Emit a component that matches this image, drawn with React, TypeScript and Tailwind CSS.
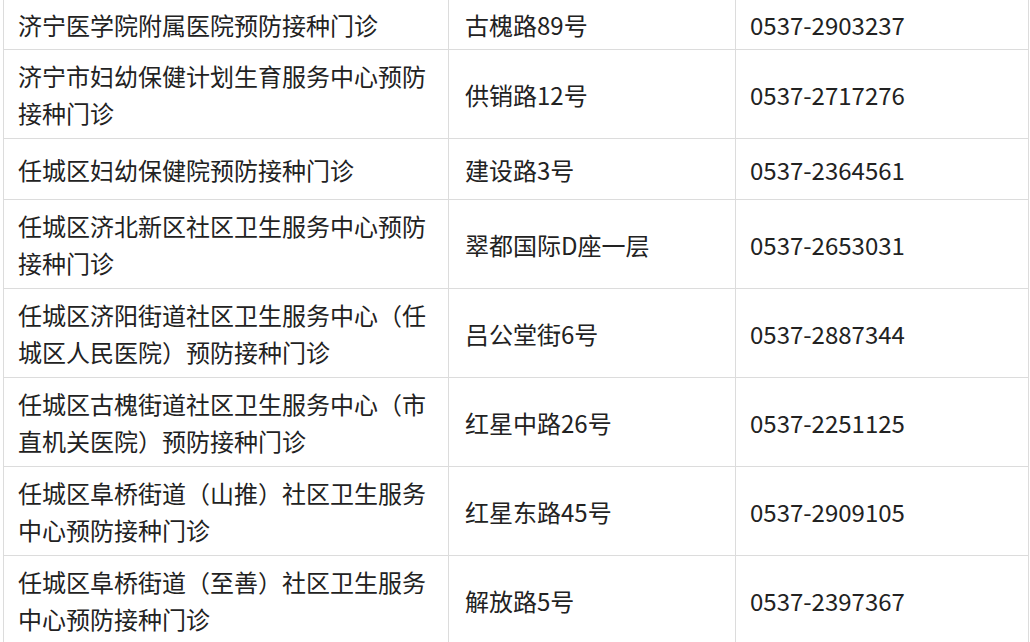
const rows = [
  { name: ["济宁医学院附属医院预防接种门诊"], addr: "古槐路89号", tel: "0537-2903237", h: "h-[50px]" },
  { name: ["济宁市妇幼保健计划生育服务中心预防", "接种门诊"], addr: "供销路12号", tel: "0537-2717276", h: "h-[89px]" },
  { name: ["任城区妇幼保健院预防接种门诊"], addr: "建设路3号", tel: "0537-2364561", h: "h-[61px]" },
  { name: ["任城区济北新区社区卫生服务中心预防", "接种门诊"], addr: "翠都国际D座一层", tel: "0537-2653031", h: "h-[89px]" },
  { name: ["任城区济阳街道社区卫生服务中心（任", "城区人民医院）预防接种门诊"], addr: "吕公堂街6号", tel: "0537-2887344", h: "h-[89px]" },
  { name: ["任城区古槐街道社区卫生服务中心（市", "直机关医院）预防接种门诊"], addr: "红星中路26号", tel: "0537-2251125", h: "h-[89px]" },
  { name: ["任城区阜桥街道（山推）社区卫生服务", "中心预防接种门诊"], addr: "红星东路45号", tel: "0537-2909105", h: "h-[89px]" },
  { name: ["任城区阜桥街道（至善）社区卫生服务", "中心预防接种门诊"], addr: "解放路5号", tel: "0537-2397367", h: "h-[89px]" },
]

export default function App() {
  return (
    <div
      className="w-[1030px] h-[642px] overflow-hidden bg-white text-[#222] text-[24px] leading-[37px]"
      style={{ fontFamily: '"Noto Sans CJK SC", "Noto Sans", sans-serif' }}
    >
      <div className="ml-[3px] w-[1026px] border-l border-r border-[#dcdcdc]">
        {rows.map((r, i) => (
          <div key={i} className={`grid grid-cols-[445px_287px_292px] border-b border-[#dcdcdc] ${r.h}`}>
            <div className="flex flex-col justify-center pl-[14px] border-r border-[#dcdcdc] whitespace-nowrap">
              {r.name.map((line, j) => (
                <span key={j}>{line}</span>
              ))}
            </div>
            <div className="flex items-center pl-4 border-r border-[#dcdcdc] whitespace-nowrap">{r.addr}</div>
            <div className="flex items-center pl-[14px] whitespace-nowrap">{r.tel}</div>
          </div>
        ))}
      </div>
    </div>
  )
}
